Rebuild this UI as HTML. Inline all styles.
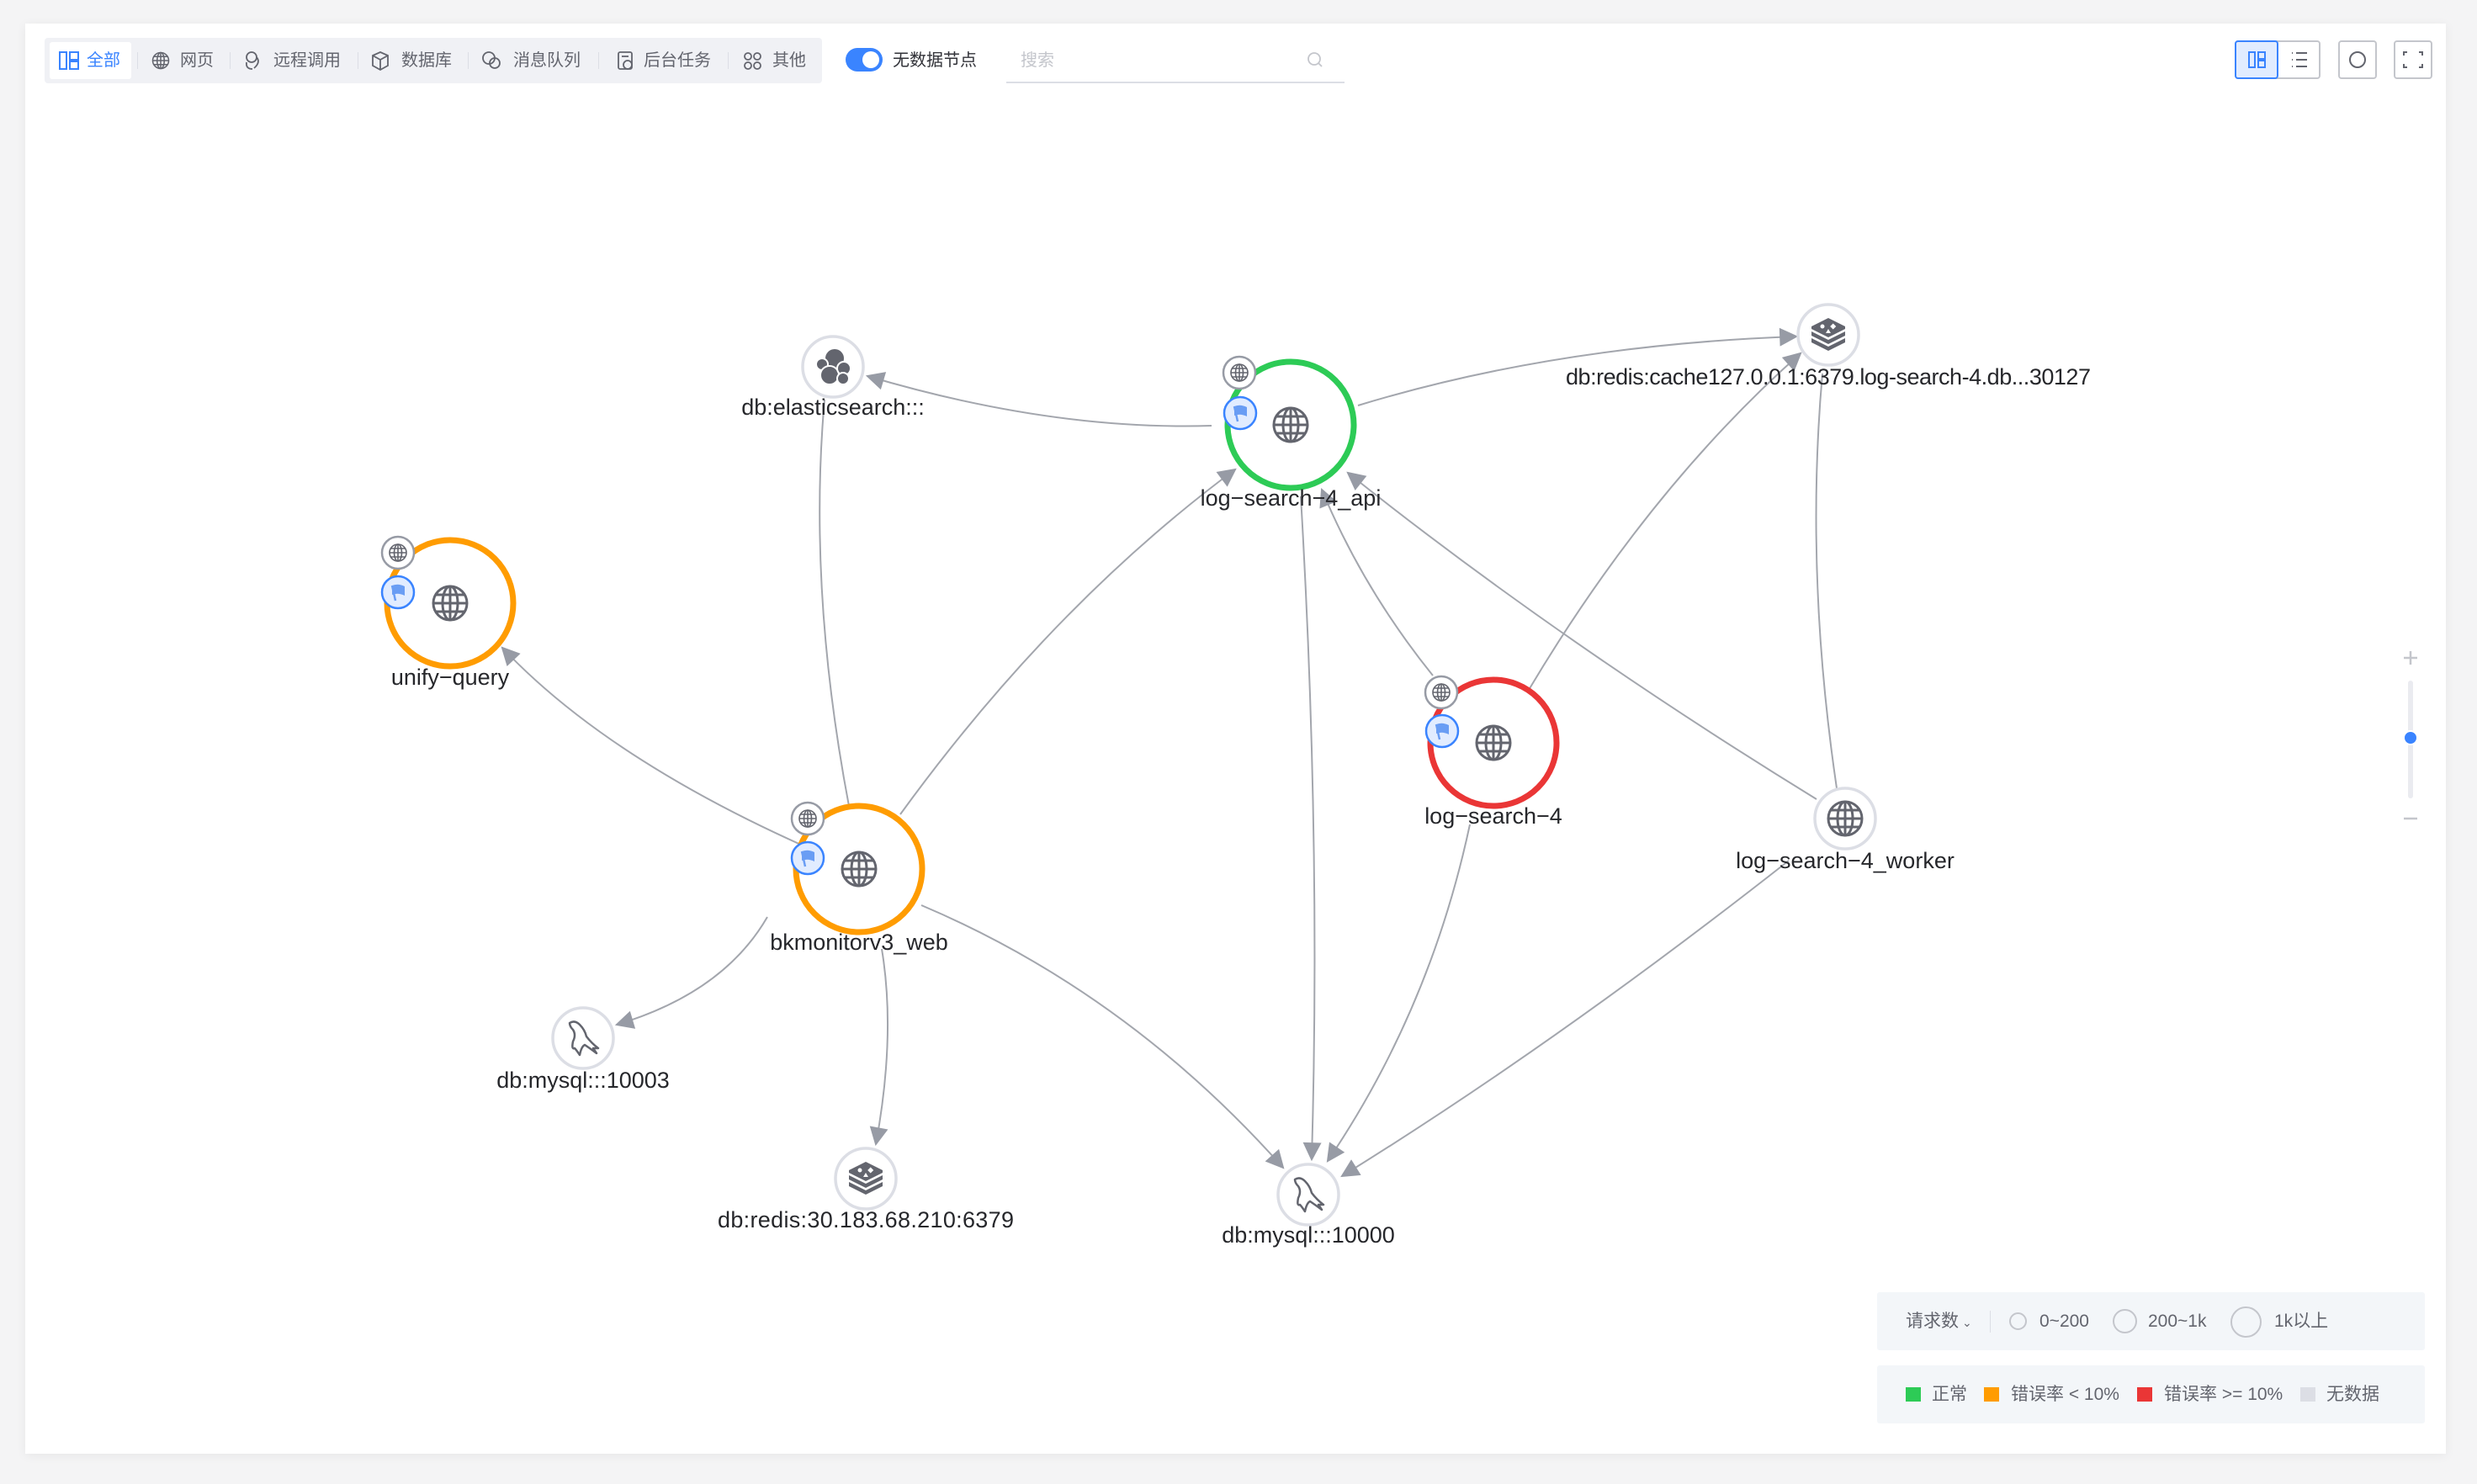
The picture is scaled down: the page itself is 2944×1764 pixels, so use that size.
<!DOCTYPE html>
<html><head><meta charset="utf-8">
<style>
*{margin:0;padding:0;box-sizing:border-box}
html,body{width:2944px;height:1764px;overflow:hidden;background:#f4f4f5;font-family:"Liberation Sans","Noto Sans CJK SC",sans-serif}
.card{position:absolute;left:30px;top:28px;width:2877px;height:1700px;background:#fff;box-shadow:0 2px 12px rgba(0,0,0,.06)}
.tb{position:absolute;left:53px;top:45px;width:924px;height:54px;background:#f0f1f5;border-radius:4px}
.ti{position:absolute;top:0;height:54px;line-height:54px;font-size:20px;color:#63656e;white-space:nowrap}
.act{position:absolute;left:6px;top:5px;width:97px;height:44px;background:#fff;border-radius:3px}
.sep{position:absolute;top:17px;width:1px;height:20px;background:#dcdee5}
.abs{position:absolute}
.lg{position:absolute;left:2231px;width:651px;height:69px;background:#f3f6f9;border-radius:3px;font-size:21px;color:#63656e}
.lg span{position:absolute;top:0;line-height:69px;white-space:nowrap}
</style></head><body>
<div class="card"></div>

<div class="tb">
 <div class="act"></div>
 <div class="ti" style="left:50px;color:#3a84ff">全部</div>
 <div class="sep" style="left:110px"></div>
 <div class="ti" style="left:161px">网页</div>
 <div class="sep" style="left:220px"></div>
 <div class="ti" style="left:272px">远程调用</div>
 <div class="sep" style="left:372px"></div>
 <div class="ti" style="left:424px">数据库</div>
 <div class="sep" style="left:503px"></div>
 <div class="ti" style="left:557px">消息队列</div>
 <div class="sep" style="left:658px"></div>
 <div class="ti" style="left:712px">后台任务</div>
 <div class="sep" style="left:812px"></div>
 <div class="ti" style="left:865px">其他</div>
</div>
<div class="abs" style="left:1005px;top:57px;width:44px;height:28px;border-radius:14px;background:#3a84ff"><div style="position:absolute;right:4px;top:4px;width:20px;height:20px;border-radius:50%;background:#fff"></div></div>
<div class="abs" style="left:1061px;top:45px;line-height:54px;font-size:20px;color:#313238">无数据节点</div>
<div class="abs" style="left:1196px;top:45px;width:402px;height:54px;border-bottom:2px solid #dcdee5"></div>
<div class="abs" style="left:1213px;top:45px;line-height:54px;font-size:20px;color:#c4c6cc">搜索</div>

<div class="lg" style="top:1536px">
 <span style="left:34px">请求数<span style="position:relative;font-size:14px;margin-left:4px">⌄</span></span>
 <div class="abs" style="left:134px;top:22px;width:1px;height:26px;background:#dcdee5"></div>
 <div class="abs" style="left:157px;top:24px;width:21px;height:21px;border-radius:50%;border:2.5px solid #c4c6cc"></div>
 <span style="left:193px">0~200</span>
 <div class="abs" style="left:280px;top:20px;width:29px;height:29px;border-radius:50%;border:2.5px solid #c4c6cc"></div>
 <span style="left:322px">200~1k</span>
 <div class="abs" style="left:420px;top:17px;width:37px;height:37px;border-radius:50%;border:2.5px solid #c4c6cc"></div>
 <span style="left:472px">1k以上</span>
</div>
<div class="lg" style="top:1623px">
 <div class="abs" style="left:34px;top:26px;width:18px;height:17px;background:#2dcb56"></div>
 <span style="left:65px">正常</span>
 <div class="abs" style="left:127px;top:26px;width:18px;height:17px;background:#ff9c01"></div>
 <span style="left:159px">错误率 &lt; 10%</span>
 <div class="abs" style="left:309px;top:26px;width:18px;height:17px;background:#ea3636"></div>
 <span style="left:341px">错误率 &gt;= 10%</span>
 <div class="abs" style="left:503px;top:26px;width:18px;height:17px;background:#dcdee5"></div>
 <span style="left:534px">无数据</span>
</div>

<svg class="abs" style="left:0;top:0" width="2944" height="1764" viewBox="0 0 2944 1764">
<defs>
<marker id="ab" viewBox="0 0 10 10" refX="9" refY="5" markerWidth="24" markerHeight="22" markerUnits="userSpaceOnUse" orient="auto"><path d="M0,0L10,5L0,10z" fill="#979ba5"/></marker>
<g id="globe" fill="none" stroke="#63656e" stroke-width="3">
<circle cx="0" cy="0" r="20"/><ellipse cx="0" cy="0" rx="9" ry="20"/><line x1="0" y1="-20" x2="0" y2="20"/><line x1="-20" y1="0" x2="20" y2="0"/><path d="M-17,-10H17M-17,10H17"/>
</g>
<g id="sglobe" fill="none" stroke="#63656e" stroke-width="1.6">
<circle r="10"/><ellipse rx="4.5" ry="10"/><line y1="-10" y2="10"/><line x1="-10" x2="10"/><path d="M-8.5,-5H8.5M-8.5,5H8.5"/>
</g>
<g id="flag"><circle r="19" fill="#e1ecff" stroke="#3a84ff" stroke-width="2.5"/><path d="M-7,-8 Q0,-11 8,-7 L8,4 Q0,0 -7,3z" fill="#699df4"/><line x1="-7" y1="-8" x2="-3" y2="10" stroke="#699df4" stroke-width="2.5"/></g>
<g id="gbadge"><circle r="19" fill="#fff" stroke="#979ba5" stroke-width="2.5"/><use href="#sglobe"/></g>
<g id="redis" fill="#63656e"><path d="M-20,4 L0,14 L20,4 L20,9 L0,19 L-20,9z"/><path d="M-20,-4 L0,6 L20,-4 L20,1 L0,11 L-20,1z"/><path d="M-20,-10 L0,-20 L20,-10 L20,-7 L0,3 L-20,-7z"/><circle cx="-7" cy="-10" r="2.5" fill="#fff"/><rect x="3" y="-13" width="5" height="5" fill="#fff" transform="rotate(45 5 -10)"/><path d="M-3,-2 L3,-2 L0,-7z" fill="#fff"/></g>
<g id="mysql" fill="none" stroke="#63656e" stroke-width="2.5" stroke-linejoin="round"><path d="M-16,-18 Q-10,-22 -4,-16 Q2,-10 4,-2 Q10,6 18,12 L12,12 L16,18 Q8,12 2,8 Q-2,10 -4,20 Q-8,14 -10,12 Q-14,14 -12,4 Q-8,-4 -12,-10 Q-16,-14 -16,-18z"/></g>
<g id="es" fill="#63656e" stroke="#fff" stroke-width="2"><circle cx="2" cy="-10" r="12"/><circle cx="-13" cy="-3" r="7"/><circle cx="-4" cy="10" r="11"/><circle cx="13" cy="2" r="8"/><circle cx="12" cy="14" r="7"/></g>
</defs>

<g fill="none" stroke="#a3a6ad" stroke-width="2">
<path d="M1440,506 Q1250,512 1031,447" marker-end="url(#ab)"/>
<path d="M1614,482 Q1850,410 2135,400" marker-end="url(#ab)"/>
<path d="M1070,968 Q1250,720 1468,558" marker-end="url(#ab)"/>
<path d="M1009,958 Q960,700 980,475"/>
<path d="M954,1005 Q720,900 597,770" marker-end="url(#ab)"/>
<path d="M912,1090 Q860,1180 733,1218" marker-end="url(#ab)"/>
<path d="M1048,1128 Q1065,1230 1041,1360" marker-end="url(#ab)"/>
<path d="M1095,1076 Q1340,1180 1525,1388" marker-end="url(#ab)"/>
<path d="M1546,590 Q1570,1000 1559,1378" marker-end="url(#ab)"/>
<path d="M1703,803 Q1620,700 1571,582" marker-end="url(#ab)"/>
<path d="M2159,950 Q1850,760 1602,562" marker-end="url(#ab)"/>
<path d="M1817,820 Q1960,580 2140,420" marker-end="url(#ab)"/>
<path d="M2183,937 Q2145,680 2166,444"/>
<path d="M1747,980 Q1700,1200 1578,1380" marker-end="url(#ab)"/>
<path d="M2126,1023 Q1850,1240 1595,1398" marker-end="url(#ab)"/>
</g>

<g fill="#fff" stroke="#dcdee5" stroke-width="3.5">
<circle cx="990" cy="436" r="36"/><circle cx="2173" cy="398" r="36"/><circle cx="2193" cy="973" r="36"/>
<circle cx="693" cy="1234" r="36"/><circle cx="1029" cy="1401" r="36"/><circle cx="1555" cy="1420" r="36"/>
</g>
<use href="#es" x="990" y="436"/>
<use href="#redis" x="2173" y="398"/>
<use href="#globe" x="2193" y="973"/>
<use href="#mysql" x="693" y="1234"/>
<use href="#redis" x="1029" y="1401"/>
<use href="#mysql" x="1555" y="1420"/>

<circle cx="1534" cy="505" r="75" fill="#fff" stroke="#2dcb56" stroke-width="7"/>
<circle cx="535" cy="717" r="75" fill="#fff" stroke="#ff9c01" stroke-width="7"/>
<circle cx="1021" cy="1033" r="75" fill="#fff" stroke="#ff9c01" stroke-width="7"/>
<circle cx="1775" cy="883" r="75" fill="#fff" stroke="#ea3636" stroke-width="7"/>
<use href="#globe" x="1534" y="505"/><use href="#globe" x="535" y="717"/><use href="#globe" x="1021" y="1033"/><use href="#globe" x="1775" y="883"/>
<use href="#gbadge" x="1473" y="443"/><use href="#flag" x="1474" y="491"/>
<use href="#gbadge" x="473" y="657"/><use href="#flag" x="473" y="704"/>
<use href="#gbadge" x="960" y="973"/><use href="#flag" x="960" y="1020"/>
<use href="#gbadge" x="1713" y="823"/><use href="#flag" x="1714" y="869"/>

<g font-family="Liberation Sans, sans-serif" font-size="27" fill="#26272b" text-anchor="middle">
<text x="990" y="493">db:elasticsearch:::</text>
<text x="1534" y="601">log−search−4_api</text>
<text x="2173" y="457" textLength="624">db:redis:cache127.0.0.1:6379.log-search-4.db...30127</text>
<text x="535" y="814">unify−query</text>
<text x="1021" y="1129">bkmonitorv3_web</text>
<text x="1775" y="979">log−search−4</text>
<text x="2193" y="1032">log−search−4_worker</text>
<text x="693" y="1293">db:mysql:::10003</text>
<text x="1029" y="1459" textLength="352">db:redis:30.183.68.210:6379</text>
<text x="1555" y="1477">db:mysql:::10000</text>
</g>

<g stroke="#c4c6cc" stroke-width="2.5"><line x1="2857" y1="782" x2="2873" y2="782"/><line x1="2865" y1="774" x2="2865" y2="790"/><line x1="2857" y1="973" x2="2873" y2="973"/></g>
<line x1="2865" y1="812" x2="2865" y2="946" stroke="#eaebf0" stroke-width="6" stroke-linecap="round"/>
<circle cx="2865" cy="877" r="8" fill="#3a84ff" stroke="#fff" stroke-width="2"/>

<rect x="2657" y="49" width="100" height="44" rx="3" fill="#fff" stroke="#c4c6cc" stroke-width="2"/>
<rect x="2657" y="49" width="50" height="44" rx="3" fill="#e1ecff" stroke="#3a84ff" stroke-width="2"/>
<g fill="none" stroke="#3a84ff" stroke-width="2"><rect x="2673" y="62" width="7" height="18"/><rect x="2684" y="62" width="8" height="8"/><rect x="2684" y="72" width="8" height="8"/></g>
<g stroke="#63656e" stroke-width="2"><line x1="2724" y1="63" x2="2725" y2="63"/><line x1="2729" y1="63" x2="2742" y2="63"/><line x1="2724" y1="71" x2="2725" y2="71"/><line x1="2729" y1="71" x2="2742" y2="71"/><line x1="2724" y1="79" x2="2725" y2="79"/><line x1="2729" y1="79" x2="2742" y2="79"/></g>
<rect x="2780" y="49" width="44" height="44" rx="3" fill="#fff" stroke="#c4c6cc" stroke-width="2"/>
<circle cx="2802" cy="71" r="9" fill="none" stroke="#63656e" stroke-width="2"/>
<rect x="2846" y="49" width="44" height="44" rx="3" fill="#fff" stroke="#c4c6cc" stroke-width="2"/>
<path d="M2857,66V62H2861M2875,62H2879V66M2879,76V80H2875M2861,80H2857V76" fill="none" stroke="#63656e" stroke-width="2"/>

<g fill="none" stroke="#3a84ff" stroke-width="2"><rect x="71" y="62" width="8" height="20"/><rect x="83" y="62" width="10" height="9"/><rect x="83" y="73" width="10" height="9"/></g>
<g transform="translate(191 72) scale(0.95)"><use href="#sglobe"/></g>
<g fill="none" stroke="#63656e" stroke-width="1.8"><circle cx="299" cy="68" r="6"/><path d="M293,74 Q292,82 300,82 M305,68 Q310,74 302,81"/>
<path d="M452,62 L461,66 L461,78 L452,83 L443,78 L443,66z M443,66 L452,71 L461,66 M452,71V83"/>
<circle cx="581" cy="69" r="7"/><circle cx="588" cy="75" r="6"/>
<rect x="735" y="62" width="16" height="20" rx="2"/><circle cx="746" cy="77" r="5"/><path d="M739,67H747"/>
<circle cx="889" cy="67" r="4"/><circle cx="900" cy="67" r="4"/><circle cx="889" cy="78" r="4"/><circle cx="900" cy="78" r="4"/>
<circle cx="1562" cy="70" r="7" stroke="#c4c6cc"/><path d="M1567,75L1571,79" stroke="#c4c6cc"/></g>
</svg>
</body></html>
